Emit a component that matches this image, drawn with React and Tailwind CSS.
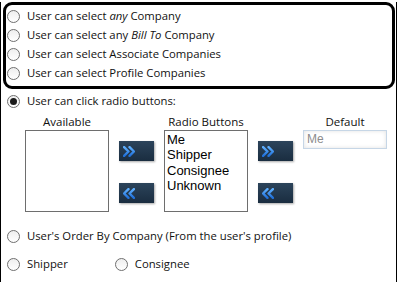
import React from 'react';

const UI_FONT = { fontFamily: '"Open Sans", "Noto Sans", sans-serif' };

function Radio({ checked }) {
  return (
    <span className="relative flex h-[13px] w-[13px] shrink-0 items-center justify-center rounded-full border border-[#6f6f6f] bg-gradient-to-b from-[#eeeeee] to-white">
      {checked && <span className="h-[7px] w-[7px] rounded-full bg-[#1b1b1b]" />}
    </span>
  );
}

function RadioRow({ checked, children, className = '' }) {
  return (
    <div className={`flex h-[19px] items-center gap-[7px] ${className}`}>
      <Radio checked={checked} />
      <span className="whitespace-nowrap">{children}</span>
    </div>
  );
}

function ArrowButton({ dir }) {
  const pts = dir === 'right'
    ? ['M1 1 L5 5 L1 9', 'M6 1 L10 5 L6 9']
    : ['M5 1 L1 5 L5 9', 'M10 1 L6 5 L10 9'];
  return (
    <button className="flex h-[20px] w-[35px] items-center bg-gradient-to-b from-[#2c445b] to-[#1a2d40] pl-[4px] shadow-[1px_1px_2px_rgba(0,0,0,0.35)]">
      <svg width="12" height="11" viewBox="0 0 11 10" fill="none">
        <defs>
          <linearGradient id={`g-${dir}`} x1="0" y1="0" x2="0" y2="1">
            <stop offset="0" stopColor="#5fb0ff" />
            <stop offset="1" stopColor="#1f6fd8" />
          </linearGradient>
        </defs>
        {pts.map((d) => (
          <path key={d} d={d} stroke={`url(#g-${dir})`} strokeWidth="2.2" strokeLinecap="round" strokeLinejoin="round" />
        ))}
      </svg>
    </button>
  );
}

function ListBox({ items = [] }) {
  return (
    <div
      className="h-[82px] w-[84px] border border-[#6e6e6e] bg-white px-[2px] pt-[1px] text-[13px] leading-[15.3px] text-black"
      style={{ fontFamily: '"Liberation Sans", Arial, sans-serif' }}
    >
      {items.map((it) => (
        <div key={it}>{it}</div>
      ))}
    </div>
  );
}

function Column({ label, children }) {
  return (
    <div className="flex flex-col items-center">
      <div className="h-[16px] text-[11.5px] leading-[16px]">{label}</div>
      {children}
    </div>
  );
}

function Buttons() {
  return (
    <div className="flex flex-col gap-[22px] pt-[27px]">
      <ArrowButton dir="right" />
      <ArrowButton dir="left" />
    </div>
  );
}

export default function App() {
  return (
    <div
      className="h-[281px] w-[397px] border-x border-b border-black bg-white text-[11.3px] text-[#111]"
      style={UI_FONT}
    >
      {/* Company choice box */}
      <div className="ml-[2px] mr-[1px] mt-[2px] h-[87px] rounded-[9px] border-[3px] border-black pl-[1px] pt-[2px]">
        <RadioRow>User can select <i>any</i> Company</RadioRow>
        <RadioRow>User can select any <i>Bill To</i> Company</RadioRow>
        <RadioRow>User can select Associate Companies</RadioRow>
        <RadioRow>User can select Profile Companies</RadioRow>
      </div>

      <div className="pl-[6px] pt-[3px]">
        <RadioRow checked>User can click radio buttons:</RadioRow>
      </div>

      <div className="ml-[24px] mt-[3px] flex gap-[10px]">
        <Column label="Available">
          <ListBox />
        </Column>
        <Buttons />
        <Column label="Radio Buttons">
          <ListBox items={['Me', 'Shipper', 'Consignee', 'Unknown']} />
        </Column>
        <Buttons />
        <Column label="Default">
          <div
            className="h-[19px] w-[84px] border border-[#c6d6e6] bg-white pl-[3px] text-[12px] leading-[17px] text-[#8c8c8c] shadow-[inset_0_0_4px_rgba(0,0,0,0.12)]"
            style={{ fontFamily: '"Liberation Sans", Arial, sans-serif' }}
          >
            Me
          </div>
        </Column>
      </div>

      <div className="pl-[6px] pt-[15px]">
        <RadioRow>User's Order By Company (From the user's profile)</RadioRow>
        <div className="mt-[9px] flex gap-[47px]">
          <RadioRow>Shipper</RadioRow>
          <RadioRow>Consignee</RadioRow>
        </div>
      </div>
    </div>
  );
}
